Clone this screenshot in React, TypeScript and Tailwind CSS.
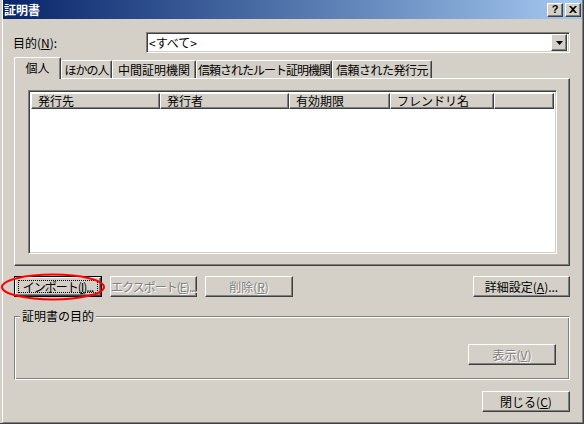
import React from "react";

const raised =
  "border border-t-white border-l-white border-r-[#404040] border-b-[#404040] shadow-[inset_-1px_-1px_0_#808080]";
const sunken =
  "border border-t-[#808080] border-l-[#808080] border-r-white border-b-white shadow-[inset_1px_1px_0_#404040,inset_-1px_-1px_0_#d4d0c8]";

function Btn({
  children,
  className = "",
  disabled = false,
  isDefault = false,
  tight = false,
}: {
  children: React.ReactNode;
  className?: string;
  disabled?: boolean;
  isDefault?: boolean;
  tight?: boolean;
}) {
  const inner = (
    <div
      className={`flex h-full w-full items-center justify-center ${raised} ${
        disabled ? "text-[#808080] [text-shadow:1px_1px_0_#fff]" : "text-black"
      }`}
    >
      <span className={`whitespace-nowrap leading-none ${tight ? "tracking-[-1px]" : ""}`}>{children}</span>
    </div>
  );
  if (isDefault) {
    return (
      <div className={`relative h-[21px] shrink-0 border border-black ${className}`}>
        {inner}
        <span className="absolute inset-[3px] border border-dotted border-black" />
      </div>
    );
  }
  return <div className={`h-[21px] shrink-0 ${className}`}>{inner}</div>;
}

const tabs = [
  { label: "ほかの人", w: "w-[51px]", extra: "tracking-[-1px]" },
  { label: "中間証明機関", w: "w-[84px]", extra: "" },
  { label: "信頼されたルート証明機関", w: "w-[136px]", extra: "tracking-[-1px]" },
  { label: "信頼された発行元", w: "w-[100px]", extra: "tracking-[-0.5px]" },
];

const columns = [
  { label: "発行先", w: "w-[129px]" },
  { label: "発行者", w: "w-[129px]" },
  { label: "有効期限", w: "w-[101px]" },
  { label: "フレンドリ名", w: "w-[104px]" },
  { label: "", w: "flex-1" },
];

export default function App() {
  return (
    <div className="relative h-[424px] w-[584px] overflow-hidden border-r border-b border-[#404040] bg-[#d4d0c8] pl-[2px] font-['Noto_Sans_CJK_JP',sans-serif] text-[12px] text-black">
      <div className="flex h-full flex-col border-l border-r border-b border-l-white border-r-[#808080] border-b-[#808080]">
        {/* Title bar */}
        <div className="flex h-[19px] items-center bg-linear-to-r from-[#0a246a] to-[#a6caf0] pr-[1px]">
          <span className="pl-[1px] text-[12px] leading-none font-bold text-white">証明書</span>
          <div className="ml-auto flex gap-[2px]">
            <div className={`flex h-[14px] w-[16px] items-center justify-center bg-[#d4d0c8] ${raised}`}>
              <span className="text-[11px] leading-none font-bold font-['Liberation_Sans',sans-serif]">?</span>
            </div>
            <div className={`flex h-[14px] w-[16px] items-center justify-center bg-[#d4d0c8] ${raised}`}>
              <svg width="8" height="7" viewBox="0 0 8 7">
                <path d="M0 0h2l2 2 2-2h2L5 3.5 8 7H6L4 5 2 7H0l3-3.5z" fill="#000" />
              </svg>
            </div>
          </div>
        </div>

        {/* Purpose row */}
        <div className="mt-[13px] flex h-[21px] items-center pl-[10px]">
          <span className="w-[133px] leading-none">
            目的(<span className="underline">N</span>):
          </span>
          <div className={`flex h-[21px] w-[424px] items-center bg-white pl-[2px] pr-[2px] ${sunken}`}>
            <span className="leading-none">&lt;すべて&gt;</span>
            <div className={`ml-auto flex h-[17px] w-[16px] items-center justify-center bg-[#d4d0c8] ${raised}`}>
              <svg width="7" height="4" viewBox="0 0 7 4">
                <path d="M0 0h7L3.5 4z" fill="#000" />
              </svg>
            </div>
          </div>
        </div>

        {/* Tabs */}
        <div className="mt-[4px] flex h-[21px] items-end pl-[11px]">
          <div className="relative z-10 mb-[-1px] flex h-[22px] w-[47px] items-start justify-center rounded-t-[2px] border-t border-l border-r border-t-white border-l-white border-r-[#404040] bg-[#d4d0c8] pt-[4px] shadow-[inset_-1px_0_0_#808080]">
            <span className="leading-none">個人</span>
          </div>
          {tabs.map((t) => (
            <div
              key={t.label}
              className={`flex h-[18px] ${t.w} items-center justify-center rounded-t-[2px] border-t border-l border-r border-t-white border-l-white border-r-[#404040] shadow-[inset_-1px_0_0_#808080]`}
            >
              <span className={`whitespace-nowrap leading-none ${t.extra}`}>{t.label}</span>
            </div>
          ))}
        </div>

        {/* Tab panel */}
        <div className={`ml-[11px] h-[188px] w-[556px] ${raised} pt-[11px] pr-[12px] pb-[11px] pl-[13px]`}>
          <div className={`flex h-full w-full flex-col bg-white p-[2px] ${sunken}`}>
            <div className="flex h-[16px]">
              {columns.map((c, i) => (
                <div
                  key={i}
                  className={`flex h-[16px] ${c.w} items-center bg-[#d4d0c8] pl-[6px] ${raised}`}
                >
                  <span className="whitespace-nowrap leading-none">{c.label}</span>
                </div>
              ))}
            </div>
          </div>
        </div>

        {/* Action buttons */}
        <div className="mt-[10px] flex pl-[11px] pr-[12px]">
          <Btn isDefault tight className="w-[88px]">
            インポート(<span className="underline">I</span>)...
          </Btn>
          <Btn disabled tight className="ml-[8px] w-[87px]">
            エクスポート(<span className="underline">E</span>)...
          </Btn>
          <Btn disabled className="ml-[8px] w-[88px]">
            削除(<span className="underline">R</span>)
          </Btn>
          <Btn className="ml-auto w-[97px]">
            詳細設定(<span className="underline">A</span>)...
          </Btn>
        </div>

        {/* Purpose group */}
        <div className="mt-[19px] pl-[11px] pr-[12px]">
          <div className="relative flex h-[64px] justify-end border border-t-[#808080] border-l-[#808080] border-r-white border-b-white pt-[27px] pr-[13px] shadow-[inset_1px_1px_0_#fff,inset_-1px_-1px_0_#808080]">
            <span className="absolute top-[-7px] left-[5px] bg-[#d4d0c8] px-[2px] leading-none">証明書の目的</span>
            <Btn disabled className="w-[88px]">
              表示(<span className="underline">V</span>)
            </Btn>
          </div>
        </div>

        {/* Close */}
        <div className="mt-[11px] flex justify-end pr-[12px]">
          <Btn className="w-[88px]">
            閉じる(<span className="underline">C</span>)
          </Btn>
        </div>
      </div>

      {/* Red highlight around import */}
      <svg className="absolute top-[273px] left-[1px]" width="104" height="28" viewBox="0 0 104 28">
        <ellipse cx="52" cy="14" rx="51" ry="12.5" fill="none" stroke="#ff0000" strokeWidth="2" />
      </svg>
    </div>
  );
}
